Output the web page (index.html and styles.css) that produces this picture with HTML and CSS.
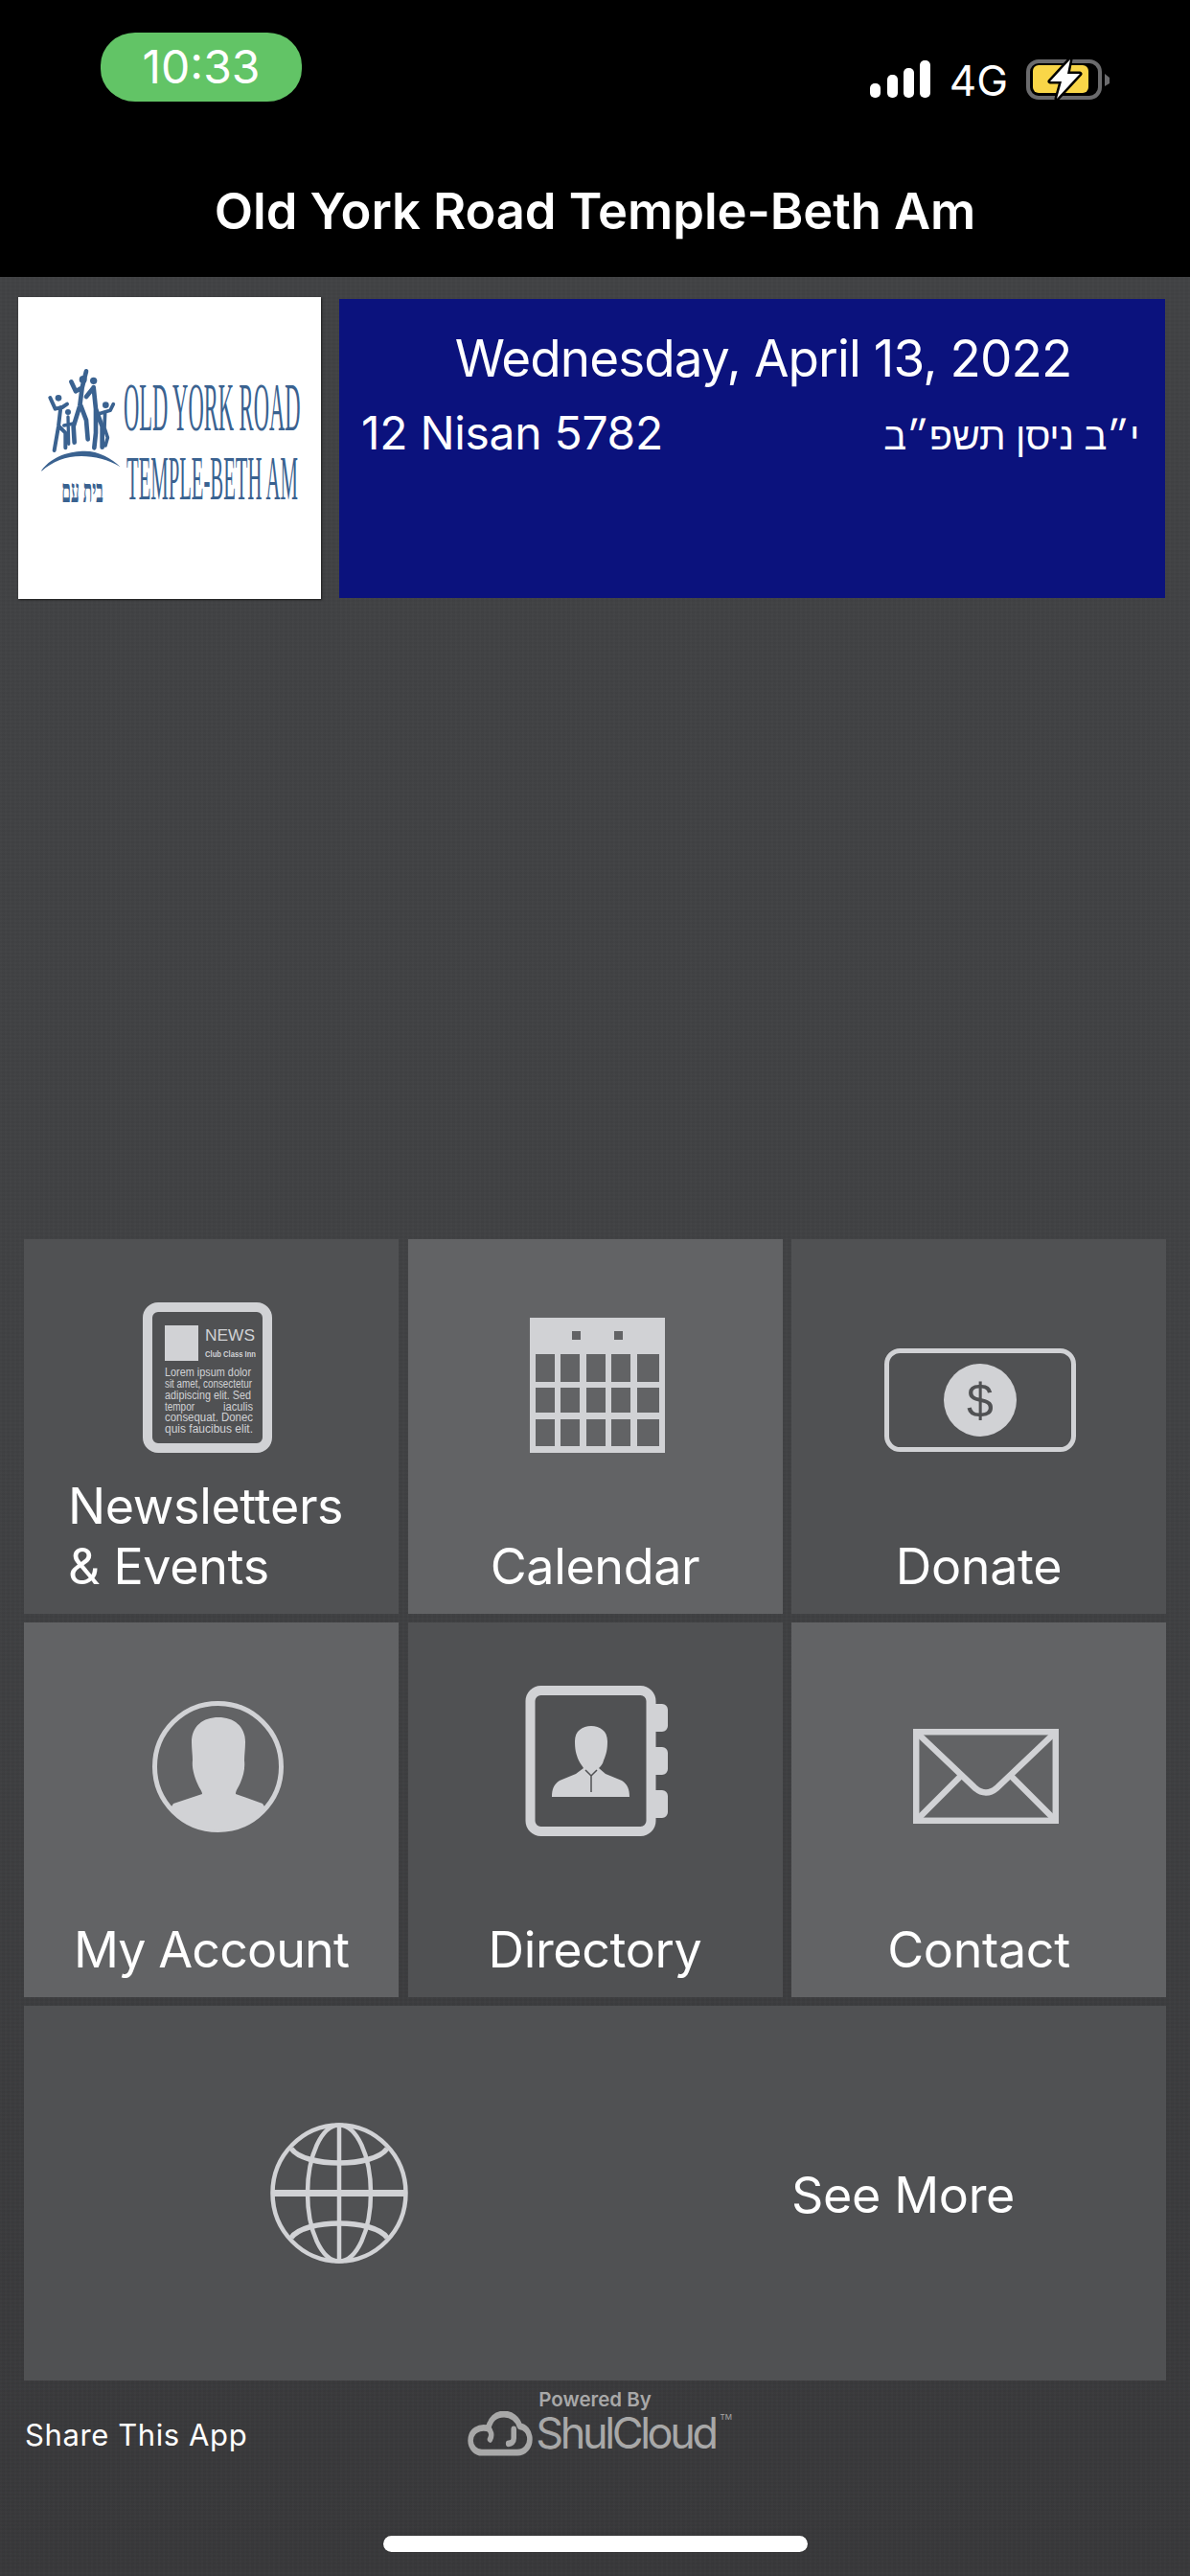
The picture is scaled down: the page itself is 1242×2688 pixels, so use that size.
FILE: index.html
```html
<!DOCTYPE html>
<html lang="en">
<head>
  <meta charset="UTF-8" />
  <meta name="viewport" content="width=device-width, initial-scale=1" />
  <title>Old York Road Temple-Beth Am</title>
  <link rel="stylesheet" href="styles.css">
</head>
<body>

<header class="top">
  <div class="status">
    <span class="clock">10:33</span>
    <div class="status-right">
      <svg class="signal" width="63" height="39" viewBox="0 0 63 39">
        <rect x="0" y="24" width="11" height="15" rx="5" />
        <rect x="18" y="15" width="11" height="24" rx="5" />
        <rect x="35" y="8" width="11" height="31" rx="5" />
        <rect x="52" y="0" width="11" height="39" rx="5" />
      </svg>
      <span class="network">4G</span>
      <svg class="battery" width="88" height="46" viewBox="0 0 88 46">
        <rect x="2" y="4" width="75" height="38" rx="11" fill="none" stroke="#6b6b6d" stroke-width="4" />
        <path d="M82 17 87 21V27L82 30Z" fill="#6b6b6d" />
        <rect x="7" y="8" width="58" height="29" rx="6" fill="#f9d648" />
        <path class="bolt" d="M46 2 25 25H37L32 43 56 17H43Z" />
      </svg>
    </div>
  </div>
  <h1 class="title">Old York Road Temple-Beth Am</h1>
</header>

<main class="content">
  <section class="banner">
    <div class="logo">
      <svg width="316" height="315" viewBox="0 0 316 315">
        <!-- family, drawn at 3x -->
        <g transform="translate(16 70) scale(0.3333)">
          <g fill="none" stroke="#3a6290" stroke-linecap="round" stroke-linejoin="round" stroke-width="14">
            <path d="M118 55 132 85 152 74 165 22M152 74 145 130 125 195 128 245M148 130 165 175 170 235" />
            <path d="M188 72 195 140 195 215 190 262M195 140 215 195 215 260M165 102 186 76" />
            <path d="M52 105 68 140 90 135 105 125M85 135 78 195 65 270M80 195 100 215 100 262" stroke-width="12" />
            <path d="M108 165 110 250M95 192 125 186" stroke-width="10" />
            <path d="M205 155 222 150 240 145 250 125M224 150 222 200 232 230 225 255" stroke-width="11" />
          </g>
          <g fill="#3a6290">
            <circle cx="155" cy="48" r="12" />
            <circle cx="188" cy="52" r="11" />
            <circle cx="78" cy="106" r="10" />
            <circle cx="108" cy="150" r="9" />
            <circle cx="226" cy="128" r="10" />
            <path d="M25 332C60 285 120 272 160 272 205 272 245 295 272 322 235 298 190 288 150 288 100 288 60 305 25 335Z" />
          </g>
        </g>
        <text class="logo-hebrew" transform="translate(67 214) scale(0.46 1)" text-anchor="middle" direction="rtl">בית עם</text>
        <text class="logo-text" transform="translate(110 139) scale(0.3175 1)">OLD YORK ROAD</text>
        <text class="logo-text logo-text-low" transform="translate(113 211) scale(0.3136 1)">TEMPLE-BETH AM</text>
      </svg>
    </div>
    <div class="date-box">
      <div class="date-main">Wednesday, April 13, 2022</div>
      <div class="date-row">
        <span>12 Nisan 5782</span>
        <span class="hebrew" lang="he" dir="rtl">י״ב ניסן תשפ״ב</span>
      </div>
    </div>
  </section>

  <nav class="tiles">
    <a class="tile tile-dark tile-left">
      <svg class="icon icon-news" width="135" height="157" viewBox="0 0 135 157">
        <rect x="5" y="5" width="125" height="147" rx="11" fill="none" stroke="#d1d2d5" stroke-width="10" />
        <rect x="23" y="24" width="35" height="37" fill="#d1d2d5" />
        <g class="news-text">
          <text class="news-head" x="65" y="40" textLength="52" lengthAdjust="spacingAndGlyphs">NEWS</text>
          <text class="news-sub" x="65" y="57" textLength="53" lengthAdjust="spacingAndGlyphs">Club Class Inn</text>
          <text x="23" y="77" textLength="90" lengthAdjust="spacingAndGlyphs">Lorem ipsum dolor</text>
          <text x="23" y="89" textLength="91" lengthAdjust="spacingAndGlyphs">sit amet, consectetur</text>
          <text x="23" y="101" textLength="90" lengthAdjust="spacingAndGlyphs">adipiscing elit. Sed</text>
          <text x="23" y="113" textLength="31" lengthAdjust="spacingAndGlyphs">tempor</text>
          <text x="84" y="113" textLength="31" lengthAdjust="spacingAndGlyphs">iaculis</text>
          <text x="23" y="124" textLength="92" lengthAdjust="spacingAndGlyphs">consequat. Donec</text>
          <text x="23" y="136" textLength="92" lengthAdjust="spacingAndGlyphs">quis faucibus elit.</text>
        </g>
      </svg>
      <span class="label">Newsletters<br />&amp; Events</span>
    </a>
    <a class="tile tile-light">
      <svg class="icon icon-calendar" width="141" height="141" viewBox="0 0 141 141">
        <path fill="#d1d2d5" fill-rule="evenodd" d="M0 0H141V141H0ZM44 14V23H53V14ZM88 14V23H97V14ZM6 38V67H26V38ZM32 38V67H52V38ZM59 38V67H79V38ZM85 38V67H105V38ZM112 38V67H135V38ZM6 73V99H26V73ZM32 73V99H52V73ZM59 73V99H79V73ZM85 73V99H105V73ZM112 73V99H135V73ZM6 106V134H26V106ZM32 106V134H52V106ZM59 106V134H79V106ZM85 106V134H105V106ZM112 106V134H135V106Z" />
      </svg>
      <span class="label">Calendar</span>
    </a>
    <a class="tile tile-dark">
      <svg class="icon icon-donate" width="200" height="108" viewBox="0 0 200 108">
        <rect x="2.500" y="2.500" width="195" height="103" rx="14" fill="none" stroke="#d1d2d5" stroke-width="5" />
        <circle cx="100" cy="54" r="38" fill="#d1d2d5" />
        <text class="dollar" x="100" y="72" text-anchor="middle">$</text>
      </svg>
      <span class="label">Donate</span>
    </a>

    <a class="tile tile-light">
      <svg class="icon icon-account" width="137" height="137" viewBox="0 0 137 137">
        <defs>
          <clipPath id="account-clip"><circle cx="68.500" cy="68.500" r="66" /></clipPath>
        </defs>
        <circle cx="68.500" cy="68.500" r="66" fill="none" stroke="#d1d2d5" stroke-width="5" />
        <path clip-path="url(#account-clip)" fill="#d1d2d5" d="M69 17C53 17 41 26 41 43 41 50 42 56 42 62 41 70 44 79 47 86 49 91 52 94 52 97L22 107 0 140H137L115 107 87 97C87 93 90 90 92 85 95 78 97 70 96 62 96 56 97 50 97 43 97 26 85 17 69 17Z" />
      </svg>
      <span class="label label-tight">My Account</span>
    </a>
    <a class="tile tile-dark">
      <svg class="icon icon-directory" width="149" height="157" viewBox="0 0 149 157">
        <rect x="5.500" y="5" width="126" height="147" rx="11" fill="none" stroke="#d1d2d5" stroke-width="10" />
        <path fill="#d1d2d5" d="M135 19h8a6 6 0 0 1 6 6v17a6 6 0 0 1-6 6h-8ZM135 64h8a6 6 0 0 1 6 6v17a6 6 0 0 1-6 6h-8ZM135 109h8a6 6 0 0 1 6 6v17a6 6 0 0 1-6 6h-8Z" />
        <path fill="#d1d2d5" d="M69 42C60 42 52 47 52 58 52 66 53 71 56 78 58 82 60 84 61 86L53 92 36 99C30 103 28 108 28 116H109C109 108 107 103 101 99L84 92 77 86C79 84 81 82 82 78 85 71 86 66 86 58 86 47 78 42 69 42Z" />
        <path fill="none" stroke="#505153" stroke-width="1.500" d="M63 88 69 94 75 88M69 94V111" />
      </svg>
      <span class="label">Directory</span>
    </a>
    <a class="tile tile-light">
      <svg class="icon icon-contact" width="152" height="99" viewBox="0 0 152 99">
        <g fill="none" stroke="#d1d2d5" stroke-width="6.500">
          <rect x="3.200" y="3.200" width="145.600" height="92.600" />
          <path d="M5 5 65 62C72 68 80 68 87 62L147 5" />
          <path d="M49 50 5 94M103 50 147 94" />
        </g>
      </svg>
      <span class="label">Contact</span>
    </a>

    <a class="tile tile-dark tile-wide">
      <svg class="icon-globe" width="144" height="147" viewBox="0 0 144 147">
        <g fill="none" stroke="#d1d2d5" stroke-width="4.500">
          <ellipse cx="72" cy="73.500" rx="69.500" ry="71" />
          <ellipse cx="72" cy="73.500" rx="33" ry="71" />
          <path d="M72 2V145" />
          <path d="M3 73.500H141" stroke-width="7" />
          <path d="M22 27C36 47 108 47 122 27" stroke-width="5.500" />
          <path d="M22 120C36 100 108 100 122 120" stroke-width="5.500" />
        </g>
      </svg>
      <span class="label">See More</span>
    </a>
  </nav>

  <footer class="foot">
    <span class="share">Share This App</span>
    <div class="powered">
      <svg class="cloud" width="68" height="47" viewBox="12 50 220 125" preserveAspectRatio="none">
        <g fill="none" stroke="#a8a8a8" stroke-width="18" stroke-linecap="round" stroke-linejoin="round">
          <path d="M60 165H180C205 165 222 148 222 128 222 108 205 92 188 92 182 72 160 58 135 58 108 58 88 72 82 98 50 92 22 105 22 132 22 150 40 165 60 165Z" />
          <path d="M82 98C92 105 95 118 88 128" />
          <path d="M168 100V125C168 135 160 140 150 140" />
        </g>
      </svg>
      <div class="powered-text">
        <span class="powered-by">Powered By</span>
        <span class="shulcloud">ShulCloud<sup class="tm">TM</sup></span>
      </div>
    </div>
  </footer>

  <div class="home-bar"></div>
</main>

</body>
</html>
```

FILE: styles.css
```css
body {
  font-family: Inter, "Liberation Sans", sans-serif;
  margin: 0;
  width: 1242px;
  height: 2688px;
  overflow: hidden;
  display: flex;
  flex-direction: column;
  color: #fff;
  background: #000;
}
.top {
  height: 289px;
  box-sizing: border-box;
  flex: none;
  background: #000;
}
.status {
  display: flex;
  justify-content: space-between;
  padding: 34px 83px 0 105px;
}
.clock {
  width: 210px;
  height: 72px;
  border-radius: 36px / 34px;
  background: #62c466;
  font-size: 48px;
  line-height: 72px;
  text-align: center;
}
.status-right {
  display: flex;
  align-items: flex-start;
  margin-top: 26px;
}
.signal {
  fill: #fff;
  margin-top: 3px;
}
.network {
  font-size: 44px;
  line-height: 44px;
  margin: 2px 19px 0 20px;
}
.bolt {
  fill: #fff;
  stroke: #000;
  stroke-width: 5px;
  stroke-linejoin: round;
  paint-order: stroke;
}
.title {
  margin: 83px 0 0 0;
  font-size: 52.5px;
  line-height: 62px;
  letter-spacing: -0.1px;
  font-weight: 600;
  text-align: center;
}

.content {
  flex: 1;
  position: relative;
  background-color: #3d3e40;
  background-image:
    repeating-linear-gradient(90deg, rgb(255 255 255 / 0.012) 0 2px, transparent 2px 5px),
    repeating-linear-gradient(0deg, rgb(0 0 0 / 0.035) 0 2px, transparent 2px 4px),
    linear-gradient(#424345, #414244 50%, #39393b);
}

.banner {
  display: flex;
  align-items: center;
  padding: 21px 26px 0 19px;
  gap: 19px;
}
.logo {
  width: 316px;
  height: 315px;
  flex: none;
  background: #fff;
  box-shadow: 1px 1px 2px #1c1c1c;
}
.logo svg {
  display: block;
}
.logo-text {
  font-family: "Liberation Serif", serif;
  font-size: 71px;
  fill: #3a6290;
}
.logo-text-low {
  font-size: 66px;
}
.logo-hebrew {
  font-family: "Liberation Serif", serif;
  font-weight: 700;
  font-size: 34px;
  fill: #3a6290;
}
.date-box {
  flex: 1;
  height: 312px;
  box-sizing: border-box;
  padding: 32px 27px 0 23px;
  background: #0b127d;
}
.date-main {
  font-size: 53px;
  line-height: 60px;
  letter-spacing: -0.9px;
  padding-left: 27px;
  text-align: center;
}
.date-row {
  display: flex;
  justify-content: space-between;
  align-items: baseline;
  margin-top: 19px;
  font-size: 48px;
  line-height: 58px;
  letter-spacing: -0.3px;
}
.hebrew {
  font-family: "Liberation Sans", sans-serif;
  font-size: 40px;
}

.tiles {
  display: grid;
  grid-template-columns: repeat(3, 1fr);
  grid-auto-rows: 391px;
  column-gap: 9.5px;
  row-gap: 9px;
  width: 1192px;
  margin: 668px 0 0 25px;
}
.tile {
  display: flex;
  flex-direction: column;
  align-items: center;
  justify-content: space-between;
  padding-bottom: 18px;
  box-sizing: border-box;
}
.tile-dark {
  background: #505153;
}
.tile-light {
  background: #626365;
}
.tile-left {
  align-items: flex-start;
  padding-left: 46px;
}
.tile-wide {
  grid-column: 1 / -1;
  flex-direction: row;
  align-items: center;
  padding: 0 158px 0 257px;
}
.tile-wide .label {
  margin-top: 4px;
}
.label {
  font-size: 52px;
  line-height: 63px;
  letter-spacing: -0.35px;
}
.label-tight {
  letter-spacing: -0.9px;
}
.icon {
  display: block;
}
.icon-news {
  margin: 66px 0 0 78px;
}
.icon-calendar {
  margin: 82px 0 0 5px;
}
.icon-donate {
  margin: 114px 0 0 3px;
}
.icon-account {
  margin: 82px 0 0 13px;
}
.icon-directory {
  margin: 66px 0 0 3px;
}
.icon-contact {
  margin: 111px 0 0 15px;
}
.news-text {
  font-family: "Liberation Sans", sans-serif;
  font-size: 12px;
  fill: #d1d2d5;
}
.news-head {
  font-size: 17px;
}
.news-sub {
  font-size: 9px;
  font-weight: 700;
}
.dollar {
  font-family: "Liberation Sans", sans-serif;
  font-size: 50px;
  fill: #505153;
}

.foot {
  position: relative;
  display: flex;
  padding: 0 0 0 26px;
}
.share {
  font-size: 31px;
  line-height: 38px;
  letter-spacing: 0.6px;
  margin-top: 38px;
}
.powered {
  display: flex;
  align-items: flex-end;
  gap: 3px;
  margin-left: 230px;
  color: #a8a8a8;
}
.cloud {
  display: block;
  margin-bottom: -1px;
}
.powered-text {
  display: flex;
  flex-direction: column;
  margin-top: 8px;
}
.powered-by {
  font-size: 20.5px;
  line-height: 24px;
  font-weight: 600;
  margin-left: 3px;
}
.shulcloud {
  font-size: 45px;
  line-height: 46px;
  font-weight: 400;
  letter-spacing: -3.4px;
}
.tm {
  font-size: 8px;
  line-height: 0;
  letter-spacing: 0;
  vertical-align: 30px;
  margin-left: 5px;
}
.home-bar {
  position: absolute;
  left: 400px;
  top: 2357px;
  width: 443px;
  height: 17px;
  border-radius: 9px;
  background: #fff;
  box-shadow: 0 0 1px #000;
}
```
